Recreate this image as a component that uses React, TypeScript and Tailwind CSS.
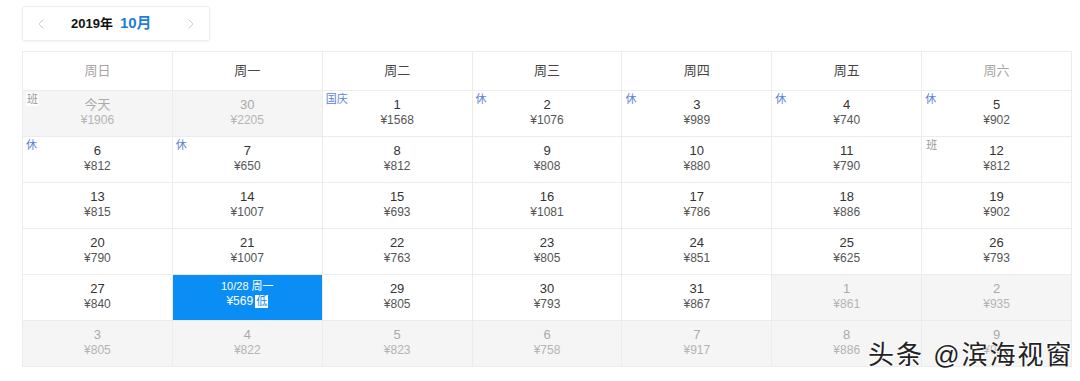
import { ChevronLeft, ChevronRight } from "lucide-react";

type Day = {
  n: string;
  p: string;
  tag?: string;
  tagGray?: boolean;
  muted?: boolean;
  selected?: boolean;
};

const weeks = ["周日", "周一", "周二", "周三", "周四", "周五", "周六"];

const days: Day[] = [
  { n: "今天", p: "¥1906", tag: "班", tagGray: true, muted: true },
  { n: "30", p: "¥2205", muted: true },
  { n: "1", p: "¥1568", tag: "国庆" },
  { n: "2", p: "¥1076", tag: "休" },
  { n: "3", p: "¥989", tag: "休" },
  { n: "4", p: "¥740", tag: "休" },
  { n: "5", p: "¥902", tag: "休" },
  { n: "6", p: "¥812", tag: "休" },
  { n: "7", p: "¥650", tag: "休" },
  { n: "8", p: "¥812" },
  { n: "9", p: "¥808" },
  { n: "10", p: "¥880" },
  { n: "11", p: "¥790" },
  { n: "12", p: "¥812", tag: "班", tagGray: true },
  { n: "13", p: "¥815" },
  { n: "14", p: "¥1007" },
  { n: "15", p: "¥693" },
  { n: "16", p: "¥1081" },
  { n: "17", p: "¥786" },
  { n: "18", p: "¥886" },
  { n: "19", p: "¥902" },
  { n: "20", p: "¥790" },
  { n: "21", p: "¥1007" },
  { n: "22", p: "¥763" },
  { n: "23", p: "¥805" },
  { n: "24", p: "¥851" },
  { n: "25", p: "¥625" },
  { n: "26", p: "¥793" },
  { n: "27", p: "¥840" },
  { n: "10/28 周一", p: "¥569", selected: true },
  { n: "29", p: "¥805" },
  { n: "30", p: "¥793" },
  { n: "31", p: "¥867" },
  { n: "1", p: "¥861", muted: true },
  { n: "2", p: "¥935", muted: true },
  { n: "3", p: "¥805", muted: true },
  { n: "4", p: "¥822", muted: true },
  { n: "5", p: "¥823", muted: true },
  { n: "6", p: "¥758", muted: true },
  { n: "7", p: "¥917", muted: true },
  { n: "8", p: "¥886", muted: true },
  { n: "9", p: "¥935", muted: true },
];

function Cell({ d }: { d: Day }) {
  if (d.selected) {
    return (
      <div className="relative h-[46px] bg-[#0a8ef5] border-r border-b border-[#ececec] flex flex-col items-center pt-[4px] text-white">
        <div className="text-[11px] leading-[14px]">{d.n}</div>
        <div className="flex items-center gap-[2px] text-[12px] leading-[16px]">
          {d.p}
          <span className="bg-white text-[#0a8ef5] text-[11px] leading-[13px] px-[1px]">低</span>
        </div>
      </div>
    );
  }
  return (
    <div
      className={`relative h-[46px] border-r border-b border-[#ececec] flex flex-col items-center pt-[5px] ${
        d.muted ? "bg-[#f5f5f5]" : "bg-white"
      }`}
    >
      {d.tag && (
        <span
          className={`absolute left-[3px] top-[2px] text-[11px] leading-[13px] ${
            d.tagGray ? "text-[#999] bg-white px-[1px]" : "text-[#5b82d6]"
          }`}
        >
          {d.tag}
        </span>
      )}
      <div className={`text-[13px] leading-[17px] ${d.muted ? "text-[#aaa]" : "text-[#333]"}`}>{d.n}</div>
      <div className={`text-[12px] leading-[15px] ${d.muted ? "text-[#b4b4b4]" : "text-[#555]"}`}>{d.p}</div>
    </div>
  );
}

export default function App() {
  return (
    <div
      className="relative w-[1080px] h-[381px] bg-white overflow-hidden"
      style={{ fontFamily: '"Liberation Sans", "Noto Sans CJK SC", sans-serif' }}
    >
      <div className="ml-[22px] mt-[6px] w-[188px] h-[35px] border border-[#eeeeee] rounded-[2px] shadow-[0_1px_3px_rgba(0,0,0,0.06)] flex items-center px-[10px]">
        <ChevronLeft className="w-[16px] h-[16px] text-[#d0d0d0]" strokeWidth={1.5} />
        <span className="ml-[22px] text-[13px] font-bold text-[#111]">2019年</span>
        <span className="ml-[7px] text-[15px] font-bold text-[#1e7fd6]">10月</span>
        <ChevronRight className="ml-auto w-[16px] h-[16px] text-[#d0d0d0]" strokeWidth={1.5} />
      </div>

      <div className="ml-[22px] mt-[10px] w-[1050px] border-l border-t border-[#ececec]">
        <div className="grid grid-cols-7">
          {weeks.map((w, i) => (
            <div
              key={w}
              className={`h-[39px] flex items-center justify-center border-r border-b border-[#ececec] text-[13px] ${
                i === 0 || i === 6 ? "text-[#a5a5a5]" : "text-[#444]"
              }`}
            >
              {w}
            </div>
          ))}
        </div>
        <div className="grid grid-cols-7">
          {days.map((d, i) => (
            <Cell key={i} d={d} />
          ))}
        </div>
      </div>

      <div
        className="absolute left-[868px] top-[338px] text-[26px] leading-[34px] text-[#222] tracking-[2px]"
        style={{ textShadow: "0 0 2px #fff, 0 0 2px #fff, 0 0 3px #fff" }}
      >
        头条 @滨海视窗
      </div>
    </div>
  );
}
